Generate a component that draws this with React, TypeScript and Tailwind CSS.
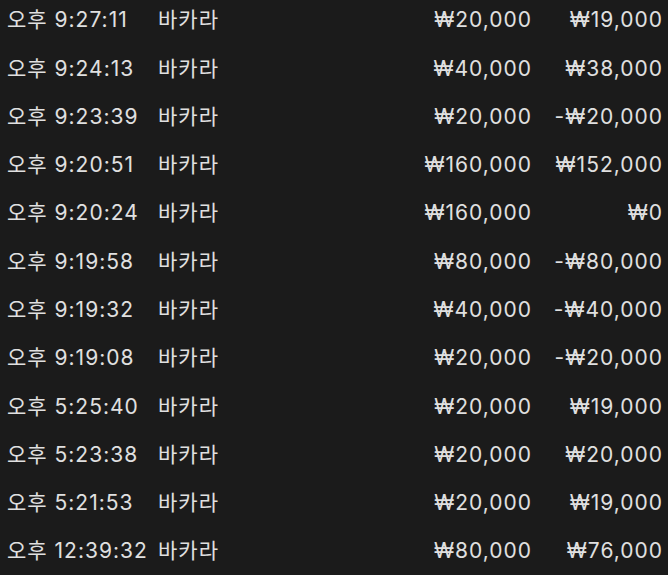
const rows = [
  ['오후 9:27:11', '바카라', '₩20,000', '₩19,000'],
  ['오후 9:24:13', '바카라', '₩40,000', '₩38,000'],
  ['오후 9:23:39', '바카라', '₩20,000', '-₩20,000'],
  ['오후 9:20:51', '바카라', '₩160,000', '₩152,000'],
  ['오후 9:20:24', '바카라', '₩160,000', '₩0'],
  ['오후 9:19:58', '바카라', '₩80,000', '-₩80,000'],
  ['오후 9:19:32', '바카라', '₩40,000', '-₩40,000'],
  ['오후 9:19:08', '바카라', '₩20,000', '-₩20,000'],
  ['오후 5:25:40', '바카라', '₩20,000', '₩19,000'],
  ['오후 5:23:38', '바카라', '₩20,000', '₩20,000'],
  ['오후 5:21:53', '바카라', '₩20,000', '₩19,000'],
  ['오후 12:39:32', '바카라', '₩80,000', '₩76,000'],
]

export default function App() {
  return (
    <div
      className="w-[668px] h-[575px] overflow-hidden bg-[#1b1b1b] text-[#e0e0e0] text-[21px] tracking-[1px]"
      style={{ fontFamily: 'Inter, "Noto Sans CJK KR", sans-serif' }}
    >
      <div className="-mt-[4px] pl-[7px] pr-[6px]">
        {rows.map((r, i) => (
          <div key={i} className="h-[48.27px] grid grid-cols-[151px_1fr_120px_131px] items-center">
            <span className="whitespace-nowrap">{r[0]}</span>
            <span>{r[1]}</span>
            <span className="text-right -mr-[1px]">{r[2]}</span>
            <span className="text-right -mr-[1px]">{r[3]}</span>
          </div>
        ))}
      </div>
    </div>
  )
}
